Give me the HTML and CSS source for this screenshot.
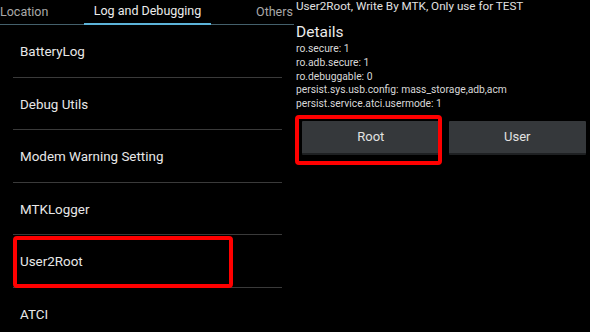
FILE: index.html
```html
<!DOCTYPE html>
<html lang="en">
<head>
  <meta charset="UTF-8" />
  <meta name="viewport" content="width=device-width, initial-scale=1.0"/>
  <title>Engineer Mode</title>
  <link rel="stylesheet" href="styles.css">
</head>
<body>
  <div class="screen">
    <div class="menu">
      <div class="tabs">
        <div class="tab first">Location</div>
        <div class="tab active">Log and Debugging</div>
        <div class="tab">Others</div>
      </div>
      <ul class="list">
        <li class="item">BatteryLog</li>
        <li class="item">Debug Utils</li>
        <li class="item">Modem Warning Setting</li>
        <li class="item">MTKLogger</li>
        <li class="item marked">User2Root<span class="highlight"></span></li>
        <li class="item">ATCI</li>
      </ul>
    </div>

    <div class="detail">
      <div class="title">User2Root, Write By MTK, Only use for TEST</div>
      <div class="heading">Details</div>
      <div class="props">
        <div>ro.secure: 1</div>
        <div>ro.adb.secure: 1</div>
        <div>ro.debuggable: 0</div>
        <div>persist.sys.usb.config: mass_storage,adb,acm</div>
        <div>persist.service.atci.usermode: 1</div>
      </div>
      <div class="buttons">
        <button class="btn marked">Root<span class="highlight"></span></button>
        <button class="btn">User</button>
      </div>
    </div>
  </div>
</body>
</html>
```

FILE: styles.css
```css
body {
  margin: 0;
  background: #000;
  font-family: Roboto, 'Noto Sans', sans-serif;
  color: #e6e6e6;
}

.screen {
  display: flex;
  width: 590px;
  height: 332px;
  overflow: hidden;
}

.menu {
  width: 294px;
  flex-shrink: 0;
  overflow: hidden;
}

.tabs {
  display: flex;
  margin-left: -43px;
  width: 337px;
  height: 24px;
  border-bottom: 1px solid #44606c;
}

.tab {
  width: 127px;
  flex-shrink: 0;
  text-align: center;
  font-size: 12.5px;
  line-height: 24px;
  color: #a9a9a9;
  box-sizing: border-box;
}

/* first tab is scrolled partly off screen */
.tab.first {
  text-align: left;
  padding-left: 43px;
}

.tab.active {
  color: #ececec;
  border-bottom: 2px solid #5cb3d9;
  line-height: 22px;
  margin-bottom: -1px;
}

.list {
  list-style: none;
  margin: 0 12px 0 13px;
  padding: 0;
}

.item {
  height: 51.5px;
  line-height: 53px;
  padding-left: 7px;
  font-size: 13.4px;
  color: #e8e8e8;
  border-bottom: 1px solid #3a3a3a;
}

.marked {
  position: relative;
}

.highlight {
  position: absolute;
  border: 4px solid #f00;
  border-radius: 4px;
  pointer-events: none;
}

.item .highlight {
  left: 0;
  top: 1px;
  width: 212px;
  height: 44px;
}

.detail {
  flex: 1;
  padding: 0 4px 0 2px;
}

.title {
  font-size: 11.7px;
  line-height: 13px;
  color: #e0e0e0;
}

.heading {
  font-size: 15.5px;
  line-height: 20px;
  margin-top: 9px;
  color: #ececec;
}

.props {
  font-size: 10.3px;
  line-height: 13.8px;
  color: #d8d8d8;
}

.buttons {
  display: flex;
  gap: 9px;
  margin-top: 10px;
  padding-left: 6px;
}

.btn {
  flex: 1;
  height: 34px;
  border: none;
  border-bottom: 2px solid #1e2022;
  border-radius: 1px;
  background: #35383b;
  color: #e2e2e2;
  font-family: inherit;
  font-size: 13px;
}

.btn .highlight {
  left: -7px;
  top: -6px;
  width: 139px;
  height: 42px;
}
```
